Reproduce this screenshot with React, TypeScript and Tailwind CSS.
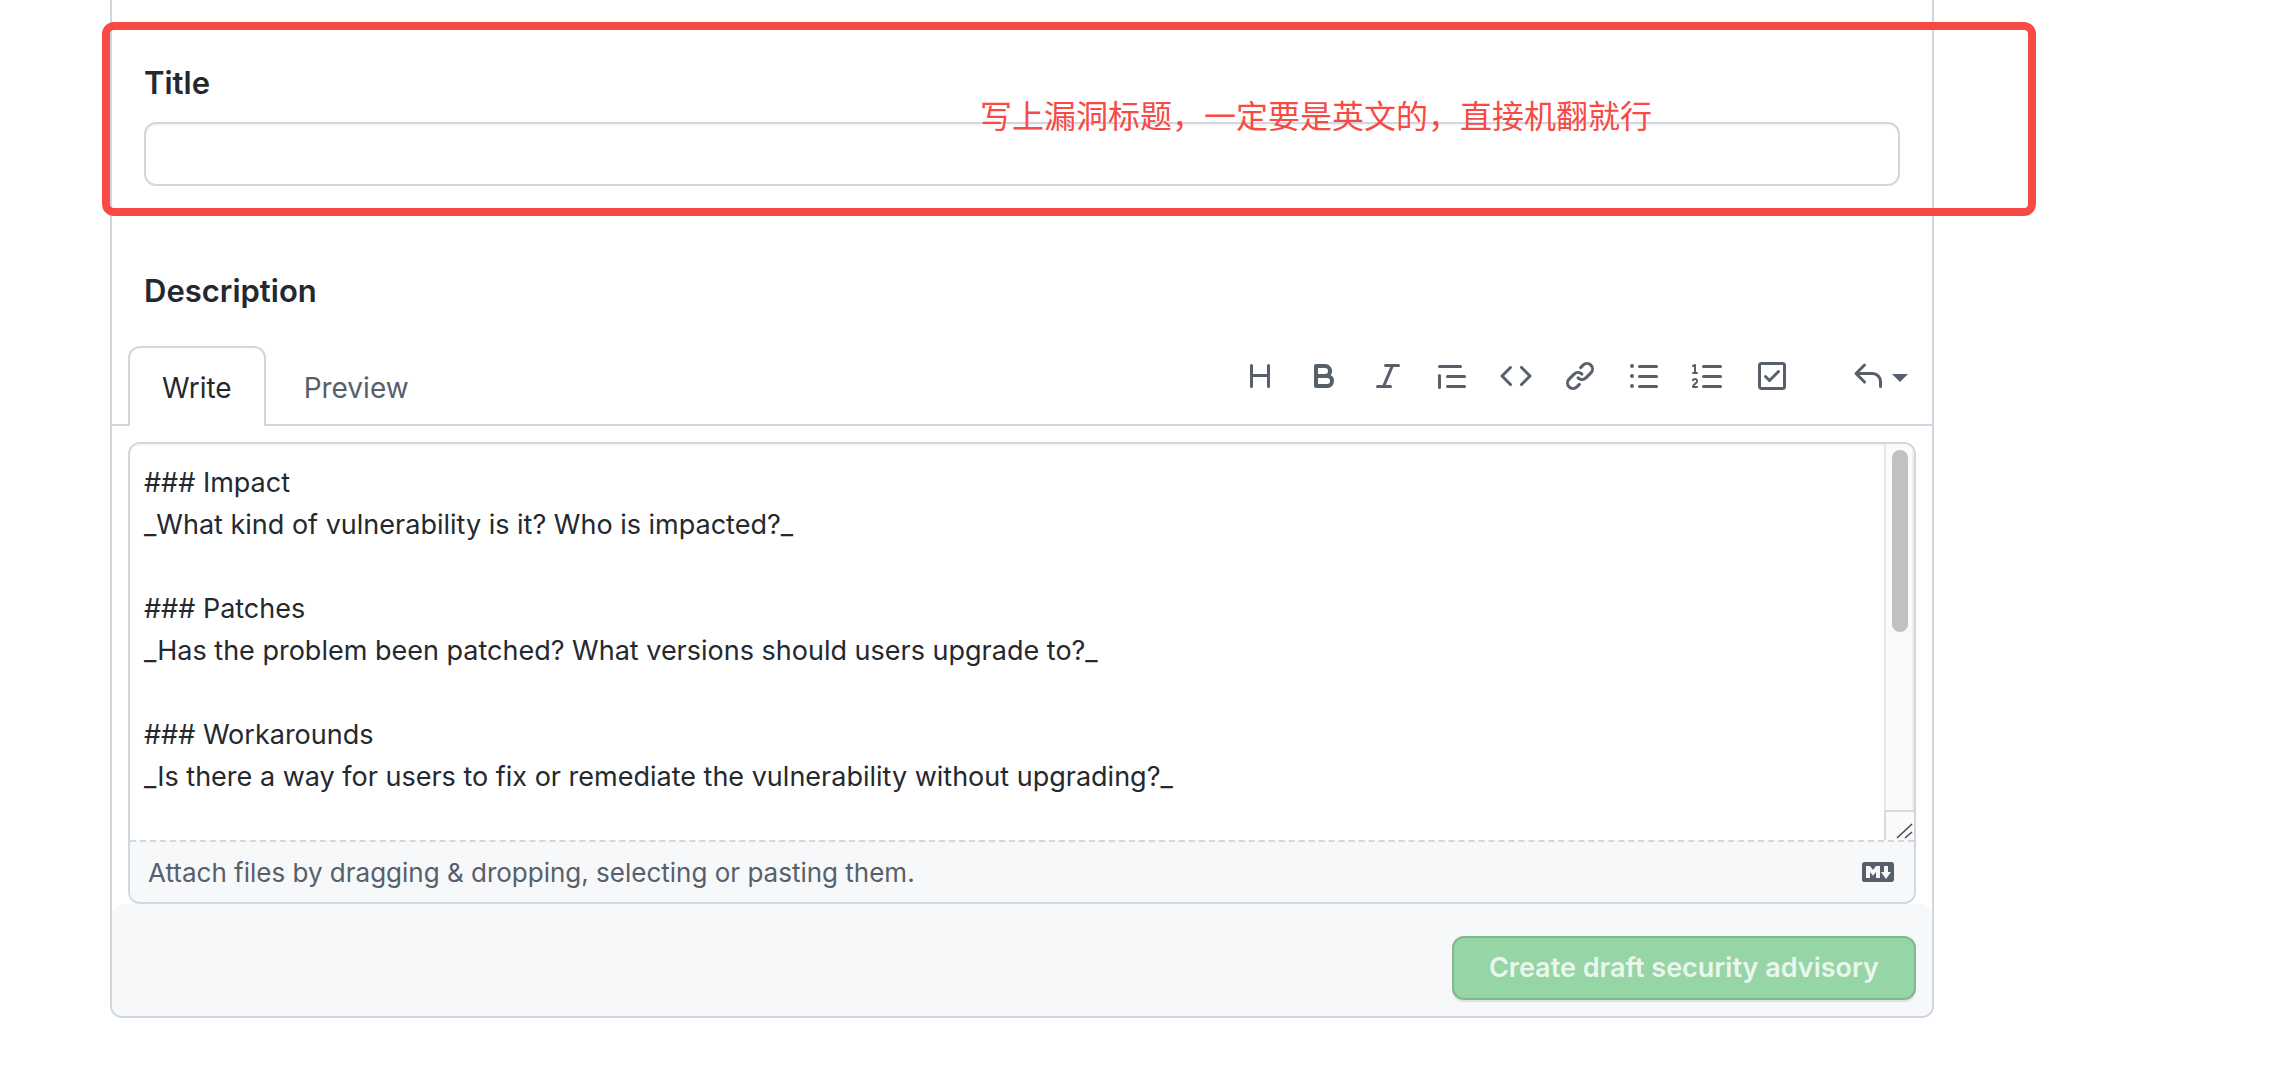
import { useState } from "react";

const toolbarIcons = [
  {
    label: "Add heading text",
    d: "M3.75 2a.75.75 0 01.75.75V7h7V2.75a.75.75 0 011.5 0v10.5a.75.75 0 01-1.5 0V8.5h-7v4.75a.75.75 0 01-1.5 0V2.75A.75.75 0 013.75 2z",
  },
  {
    label: "Add bold text",
    d: "M4 2a1 1 0 00-1 1v10a1 1 0 001 1h5.5a3.5 3.5 0 001.852-6.47A3.5 3.5 0 008.5 2H4zm4.5 5a1.5 1.5 0 100-3H5v3h3.5zM5 9v3h4.5a1.5 1.5 0 000-3H5z",
  },
  {
    label: "Add italic text",
    d: "M6 2.75A.75.75 0 016.75 2h6.5a.75.75 0 010 1.5h-2.505l-3.858 9H9.25a.75.75 0 010 1.5h-6.5a.75.75 0 010-1.5h2.505l3.858-9H6.75A.75.75 0 016 2.75z",
  },
  {
    label: "Insert a quote",
    d: "M1.75 2.5a.75.75 0 000 1.5h10.5a.75.75 0 000-1.5H1.75zm4 5a.75.75 0 000 1.5h8.5a.75.75 0 000-1.5h-8.5zm0 5a.75.75 0 000 1.5h8.5a.75.75 0 000-1.5h-8.5zM2.5 7.75a.75.75 0 00-1.5 0v6a.75.75 0 001.5 0v-6z",
  },
  {
    label: "Insert code",
    d: "M4.72 3.22a.75.75 0 011.06 1.06L2.06 8l3.72 3.72a.75.75 0 11-1.06 1.06L.47 8.53a.75.75 0 010-1.06l4.25-4.25zm6.56 0a.75.75 0 10-1.06 1.06L13.94 8l-3.72 3.72a.75.75 0 101.06 1.06l4.25-4.25a.75.75 0 000-1.06l-4.25-4.25z",
  },
  {
    label: "Add a link",
    d: "M7.775 3.275a.75.75 0 001.06 1.06l1.25-1.25a2 2 0 112.83 2.83l-2.5 2.5a2 2 0 01-2.83 0 .75.75 0 00-1.06 1.06 3.5 3.5 0 004.95 0l2.5-2.5a3.5 3.5 0 00-4.95-4.95l-1.25 1.25zm-4.69 9.64a2 2 0 010-2.83l2.5-2.5a2 2 0 012.83 0 .75.75 0 001.06-1.06 3.5 3.5 0 00-4.95 0l-2.5 2.5a3.5 3.5 0 004.95 4.95l1.25-1.25a.75.75 0 00-1.06-1.06l-1.25 1.25a2 2 0 01-2.83 0z",
  },
  {
    label: "Add a bulleted list",
    d: "M2 4a1 1 0 100-2 1 1 0 000 2zm3.75-1.5a.75.75 0 000 1.5h8.5a.75.75 0 000-1.5h-8.5zm0 5a.75.75 0 000 1.5h8.5a.75.75 0 000-1.5h-8.5zm0 5a.75.75 0 000 1.5h8.5a.75.75 0 000-1.5h-8.5zM3 8a1 1 0 11-2 0 1 1 0 012 0zm-1 6a1 1 0 100-2 1 1 0 000 2z",
  },
  {
    label: "Add a numbered list",
    d: "M2.003 2.5a.5.5 0 00-.723-.447l-1.003.5a.5.5 0 00.446.895l.28-.14V6H.5a.5.5 0 000 1h2.006a.5.5 0 100-1h-.503V2.5zM5 3.25a.75.75 0 01.75-.75h8.5a.75.75 0 010 1.5h-8.5A.75.75 0 015 3.25zm0 5a.75.75 0 01.75-.75h8.5a.75.75 0 010 1.5h-8.5A.75.75 0 015 8.25zm0 5a.75.75 0 01.75-.75h8.5a.75.75 0 010 1.5h-8.5a.75.75 0 01-.75-.75zM.924 10.32l.003-.004a.851.851 0 01.144-.153A.66.66 0 011.5 10c.195 0 .306.068.374.146a.57.57 0 01.128.376c0 .453-.269.682-.8 1.078l-.035.025C.692 11.98 0 12.495 0 13.5a.5.5 0 00.5.5h2.003a.5.5 0 000-1H1.146c.132-.197.351-.372.654-.597l.047-.035c.47-.35 1.156-.858 1.156-1.845 0-.365-.118-.744-.377-1.038-.268-.303-.658-.484-1.126-.484-.48 0-.84.202-1.068.392a1.858 1.858 0 00-.348.384l-.007.011-.002.004-.001.002-.001.001a.5.5 0 00.851.525z",
  },
  {
    label: "Add a task list",
    d: "M2.5 2.75a.25.25 0 01.25-.25h10.5a.25.25 0 01.25.25v10.5a.25.25 0 01-.25.25H2.75a.25.25 0 01-.25-.25V2.75zM2.75 1A1.75 1.75 0 001 2.75v10.5c0 .966.784 1.75 1.75 1.75h10.5A1.75 1.75 0 0015 13.25V2.75A1.75 1.75 0 0013.25 1H2.75zm9.03 5.28a.75.75 0 00-1.06-1.06L6.75 9.19 5.28 7.72a.75.75 0 00-1.06 1.06l2 2a.75.75 0 001.06 0l4.5-4.5z",
  },
];

const replyPath =
  "M6.78 1.97a.75.75 0 010 1.06L3.81 6h6.44A4.75 4.75 0 0115 10.75v2.5a.75.75 0 01-1.5 0v-2.5a3.25 3.25 0 00-3.25-3.25H3.81l2.97 2.97a.75.75 0 11-1.06 1.06L1.47 7.28a.75.75 0 010-1.06l4.25-4.25a.75.75 0 011.06 0z";

const markdownPath =
  "M14.85 3H1.15C.52 3 0 3.52 0 4.15v7.69C0 12.48.52 13 1.15 13h13.69c.64 0 1.15-.52 1.15-1.15v-7.7C16 3.52 15.48 3 14.85 3zM9 11H7V8L5.5 9.92 4 8v3H2V5h2l1.5 2L7 5h2v6zm2.99.5L9.5 8H11V5h2v3h1.5l-2.51 3.5z";

const template = `### Impact
_What kind of vulnerability is it? Who is impacted?_

### Patches
_Has the problem been patched? What versions should users upgrade to?_

### Workarounds
_Is there a way for users to fix or remediate the vulnerability without upgrading?_`;

function Octicon({ d }: { d: string }) {
  return (
    <svg viewBox="0 0 16 16" className="size-8 shrink-0" fill="currentColor" fillRule="evenodd" aria-hidden="true">
      <path d={d} />
    </svg>
  );
}

function Toolbar() {
  return (
    <div className="mb-5 flex items-center pr-6 text-[#57606a]">
      {toolbarIcons.map((icon) => (
        <button key={icon.label} type="button" aria-label={icon.label} className="px-4 py-3">
          <Octicon d={icon.d} />
        </button>
      ))}
      <button type="button" aria-label="Add saved reply" className="ml-8 flex items-center gap-2 py-3 pl-4">
        <Octicon d={replyPath} />
        <svg viewBox="0 0 16 8" className="mt-1 h-2 w-4" fill="currentColor" aria-hidden="true">
          <path d="M0 0h16L8 8z" />
        </svg>
      </button>
    </div>
  );
}

function Scrollbar() {
  return (
    <div className="flex w-[30px] flex-col" aria-hidden="true">
      <div className="flex-1 border-x-2 border-l-[#e7e7e7] border-r-[#ededed] bg-[#fafafa] px-1.5 pt-1.5">
        <div className="h-[182px] w-4 rounded-full bg-[#c1c1c1]" />
      </div>
      <svg viewBox="0 0 30 30" className="size-[30px]">
        <path d="M0 0h30v30H0z" fill="#fafafa" />
        <path d="M1 30V1h29" fill="none" stroke="#d9d9d9" strokeWidth="2" />
        <path d="M13 28L28 14M21 28l7-6" stroke="#4a4a4a" strokeWidth="1.6" />
      </svg>
    </div>
  );
}

export default function App() {
  const [title, setTitle] = useState("");
  const [description, setDescription] = useState(template);

  return (
    <div className="overflow-hidden bg-white pb-[52px] font-[Inter,'Noto_Sans_CJK_SC',sans-serif] text-[27px] leading-[42px] text-[#24292f]">
      <form className="relative mr-[340px] ml-[110px] rounded-b-xl border-2 border-t-0 border-[#d0d7e0]">
        <div className="px-8 pt-[58px]">
          <label htmlFor="title" className="block text-[31px] leading-[50px] font-semibold">
            Title
          </label>
          <input
            id="title"
            value={title}
            onChange={(e) => setTitle(e.target.value)}
            className="mt-3.5 block h-16 w-full rounded-xl border-2 border-[#d0d7e0] px-4 shadow-[inset_0_2px_0_#f5f7f9] outline-none"
          />
          <label htmlFor="description" className="mt-20 block text-[31px] leading-[50px] font-semibold">
            Description
          </label>
        </div>

        <div className="mt-[30px] flex items-end justify-between border-b-2 border-[#d0d7e0] pl-4">
          <div className="-mb-0.5 flex gap-1 text-[28px]">
            <button
              type="button"
              className="h-20 rounded-t-xl border-2 border-b-0 border-[#d0d7e0] bg-white px-8 pt-0.5"
            >
              Write
            </button>
            <button type="button" className="h-20 border-2 border-b-0 border-transparent px-8 pt-0.5 text-[#57606a]">
              Preview
            </button>
          </div>
          <Toolbar />
        </div>

        <div className="mx-4 mt-4 overflow-hidden rounded-xl border-2 border-[#d0d7e0]">
          <div className="flex">
            <textarea
              id="description"
              value={description}
              onChange={(e) => setDescription(e.target.value)}
              className="h-[396px] flex-1 resize-none overflow-hidden px-3.5 py-[18px] shadow-[inset_0_2px_0_#f5f7f9] outline-none"
            />
            <Scrollbar />
          </div>
          <div className="flex h-[62px] items-center justify-between border-t-2 border-dashed border-[#d0d7e0] bg-[#f6f8fa] pr-5 pl-[18px] text-[#57606a]">
            <label htmlFor="attachments" className="pt-0.5 text-[26px]">
              Attach files by dragging &amp; dropping, selecting or pasting them.
            </label>
            <input id="attachments" type="file" multiple className="sr-only" />
            <a href="#markdown" aria-label="Styling with Markdown is supported">
              <Octicon d={markdownPath} />
            </a>
          </div>
        </div>

        <div className="flex justify-end rounded-xl bg-[#f6f8fa] px-4 pt-8 pb-4">
          <button
            type="submit"
            disabled
            className="h-16 rounded-xl border-2 border-[#80b98e] bg-[#96d5a5] px-[35px] font-semibold text-[#eaf7ed] shadow-[0_2px_0_rgba(27,31,36,0.1)]"
          >
            Create draft security advisory
          </button>
        </div>

        {/* Callout around the title field */}
        <div className="pointer-events-none absolute top-[22px] -right-[104px] -left-[10px] h-[194px] rounded-xl border-8 border-[#f84a45] pt-[67px] pl-[870px]">
          <p className="text-[32px] leading-10 whitespace-nowrap text-[#f84a45]">
            写上漏洞标题，一定要是英文的，直接机翻就行
          </p>
        </div>
      </form>
    </div>
  );
}
